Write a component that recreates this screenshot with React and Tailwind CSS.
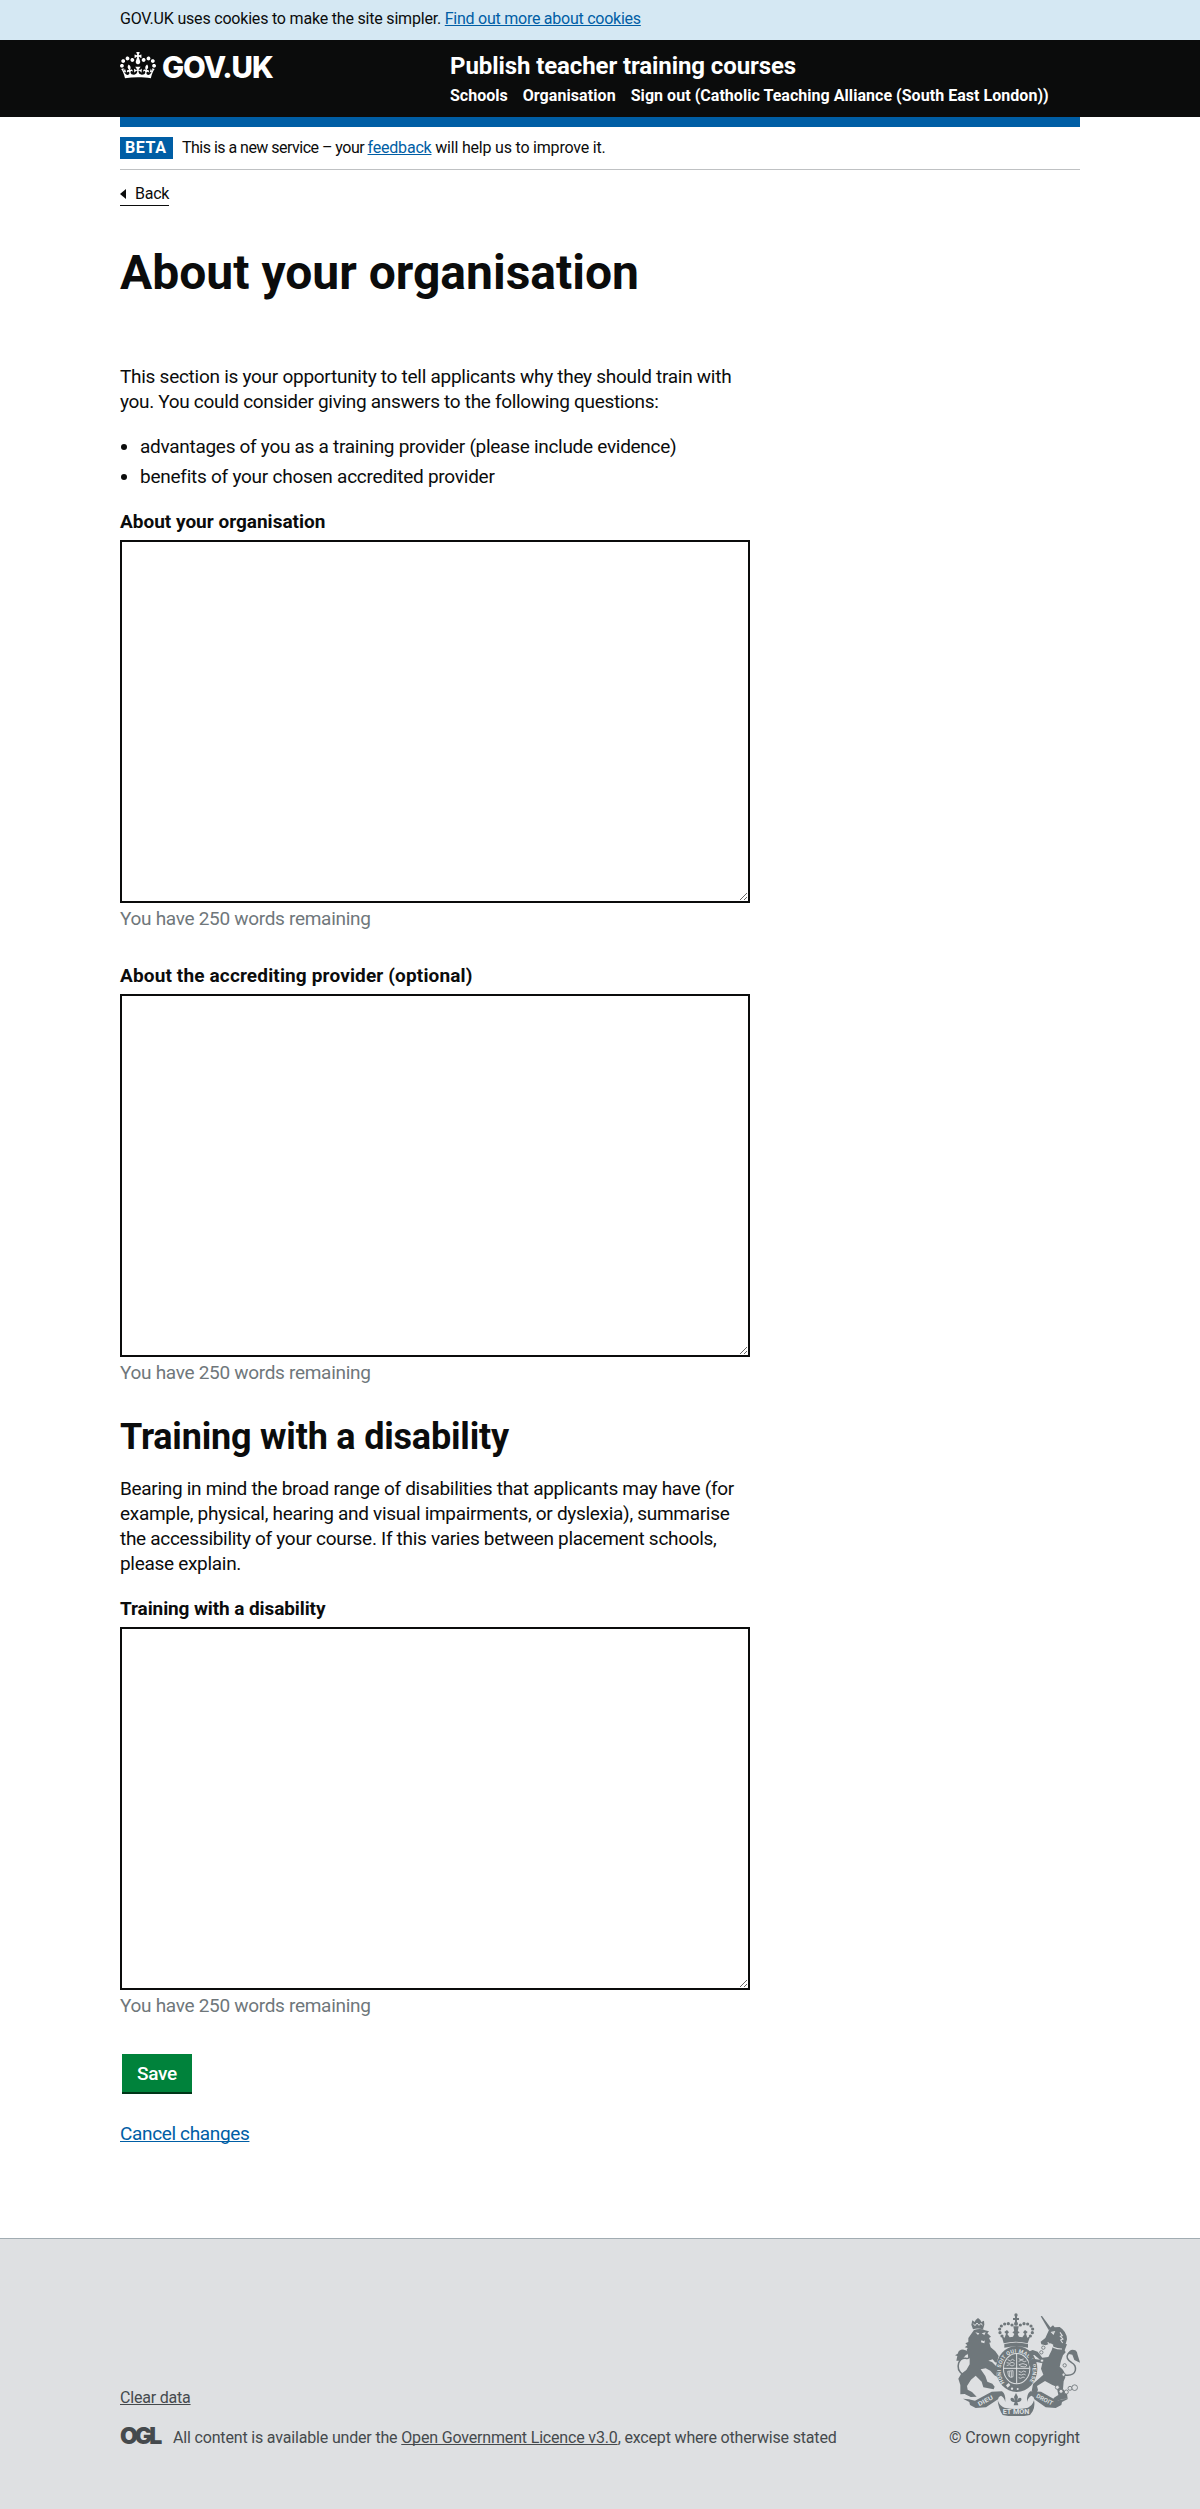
function Crown() {
  return (
    <svg viewBox="0 0 132 97" className="h-[26.5px] w-9 shrink-0 fill-white" aria-hidden="true">
      <path d="M25 30.2c3.5 1.5 7.7-.2 9.1-3.7 1.5-3.6-.2-7.8-3.9-9.2-3.6-1.4-7.6.3-9.1 3.9-1.4 3.5.3 7.5 3.9 9zM9 39.5c3.6 1.5 7.8-.2 9.2-3.7 1.5-3.6-.2-7.8-3.9-9.1-3.6-1.5-7.6.2-9.1 3.8-1.4 3.5.3 7.5 3.8 9zM4.4 57.2c3.5 1.5 7.7-.2 9.1-3.8 1.5-3.6-.2-7.7-3.9-9.1-3.5-1.5-7.6.3-9.1 3.8-1.4 3.5.3 7.6 3.9 9.1zm38.3-21.4c3.5 1.5 7.7-.2 9.1-3.8 1.5-3.6-.2-7.7-3.9-9.1-3.6-1.5-7.6.3-9.1 3.8-1.3 3.6.4 7.7 3.9 9.1zm64.4-5.6c-3.6 1.5-7.8-.2-9.1-3.7-1.5-3.6.2-7.8 3.8-9.2 3.6-1.4 7.7.3 9.2 3.9 1.3 3.5-.4 7.5-3.9 9zm15.9 9.3c-3.6 1.5-7.7-.2-9.1-3.7-1.5-3.6.2-7.8 3.7-9.1 3.6-1.5 7.7.2 9.2 3.8 1.5 3.5-.3 7.5-3.8 9zm4.7 17.7c-3.6 1.5-7.8-.2-9.2-3.8-1.5-3.6.2-7.7 3.9-9.1 3.6-1.5 7.7.3 9.2 3.8 1.3 3.5-.4 7.6-3.9 9.1zM89.3 35.8c-3.6 1.5-7.8-.2-9.2-3.8-1.4-3.6.2-7.7 3.9-9.1 3.6-1.5 7.7.3 9.2 3.8 1.4 3.6-.3 7.7-3.9 9.1zM69.7 17.7l8.9 4.7V9.3l-8.9 2.8c-.2-.3-.5-.6-.9-.9L72.4 0H59.6l3.5 11.2c-.3.3-.6.5-.9.9l-8.8-2.8v13.1l8.8-4.7c.3.3.6.7.9.9l-5 15.4v.1c-.2.8-.4 1.6-.4 2.4 0 4.1 3.1 7.5 7 8.1h.2c.3 0 .7.1 1 .1.4 0 .7 0 1-.1h.2c4-.6 7.1-4.1 7.1-8.1 0-.8-.1-1.7-.4-2.4V34l-5.1-15.4c.4-.2.7-.6 1-.9zM66 92.8c16.9 0 32.8 1.1 47.1 3.2 4-16.9 8.9-26.7 14-33.5l-9.6-3.4c1 4.9 1.1 7.2 0 10.2-1.5-1.4-3-4.3-4.2-8.7L108.6 76c2.8-2 5-3.2 7.5-3.3-4.4 9.4-10 11.9-13.6 11.2-4.3-.8-6.3-4.6-5.6-7.9 1-4.7 5.7-5.9 8-.5 4.3-8.7-3-11.4-7.6-8.8 7.1-7.2 7.9-13.5 2.1-21.1-8 6.1-8.1 12.3-4.5 20.8-4.7-5.4-12.1-2.5-9.5 6.2 3.4-5.2 7.9-2 7.2 3.1-.6 4.3-6.4 7.8-13.5 7.2-10.3-.9-10.9-8-11.2-13.8 2.5-.5 7.1 1.8 11 7.3L80.2 60c-4.1 4.4-8 5.3-12.3 5.4 1.4-4.4 8-11.6 8-11.6H55.5s6.4 7.2 7.9 11.6c-4.2-.1-8-1-12.3-5.4l1.4 16.4c3.9-5.5 8.5-7.7 10.9-7.3-.3 5.8-.9 12.8-11.1 13.8-7.2.6-12.9-2.9-13.5-7.2-.7-5 3.8-8.3 7.1-3.1 2.7-8.7-4.6-11.6-9.4-6.2 3.7-8.5 3.6-14.7-4.6-20.8-5.8 7.6-5 13.9 2.2 21.1-4.7-2.6-11.9.1-7.7 8.8 2.3-5.5 7.1-4.2 8.1.5.7 3.3-1.3 7.1-5.7 7.9-3.5.7-9-1.8-13.5-11.2 2.5.1 4.7 1.3 7.5 3.3l-4.7-15.4c-1.2 4.4-2.7 7.2-4.3 8.7-1.1-3-.9-5.3 0-10.2l-9.5 3.4c5 6.9 9.9 16.7 14 33.5 14.8-2.1 30.8-3.2 47.7-3.2z" />
    </svg>
  );
}

const archBeads = [
  [186, 51], [175, 47], [164, 48], [154, 54], [149, 63], [150, 74], [156, 84],
  [211, 51], [222, 47], [233, 48], [243, 54], [248, 63], [247, 74], [241, 84],
];

function Crest() {
  return (
    <svg viewBox="15 15 375 309" className="h-[103px] w-[125px] fill-[#6f777b]" aria-hidden="true">
      <defs>
        <path id="garter" d="M164 224 A48 54 0 1 1 236 224" />
      </defs>

      {/* central crown */}
      <circle cx="198" cy="21" r="5" />
      <path d="M195 24h6v6h6v6h-6v7h-6v-7h-6v-6h6z" />
      <circle cx="198" cy="47" r="6" />
      {archBeads.map(([x, y]) => (
        <circle key={`${x}-${y}`} cx={x} cy={y} r="4.8" />
      ))}
      <path d="M190 55h16l-3 17h-10z" />
      <path d="M155 84l9 5 4-12-5-5 8-6 6 7-5 5 7 10 10-2 4-8-6-5 11-7 11 7-6 5 4 8 10 2 7-10-5-5 6-7 8 6-5 5 4 12 9-5-8 22q-35-9-72 0z" />
      <path d="M163 108q35-9 71 0v11q-35-9-71 0z" />

      {/* garter and shield */}
      <ellipse cx="200" cy="183" rx="62" ry="69" />
      <ellipse cx="200" cy="182" rx="41" ry="47" fill="#dee0e2" />
      <ellipse cx="200" cy="182" rx="38" ry="44" />
      <path d="M200 138v88M162 181h76" stroke="#dee0e2" strokeWidth="3" />
      <g fill="none" stroke="#dee0e2" strokeWidth="2.4">
        <path d="M173 155l8 4 6-5 7 4M170 164l9 2 7-3 8 3M170 173l8-3 8 4 8-4" />
        <path d="M206 152l7 3 8-2M206 160l8-3 9 4 6-2M207 170q12-7 24 1l-5 6-14-2z" />
        <path d="M173 190l16-2v18q-14 8-16-16zM178 190v17M184 190v18" />
        <path d="M206 190l8 3 7-4 7 3M206 199l8 2 8-3 5 3M206 209l6 2 7-4 5 2" />
      </g>
      <text fill="#dee0e2" fontFamily="Roboto, sans-serif" fontSize="16" fontWeight="700">
        <textPath href="#garter" textLength="232" lengthAdjust="spacing">
          HONI SOIT QUI MAL Y PENSE
        </textPath>
      </text>
      <g fill="#dee0e2">
        <circle cx="186" cy="242" r="3.5" />
        <circle cx="203" cy="243" r="3" />
        <path d="M168 232l8-7 5 6-8 8z" />
      </g>

      {/* lion */}
      <path d="M64 50l3-13 7 5 3-6 7-6 7 6 3 6 8-4 1 12-4 14q-16-5-30 0z" />
      <path d="M70 47l5 6 6-8 6 7 6-6 4 6" fill="none" stroke="#dee0e2" strokeWidth="3" />
      <path d="M72 66q20-6 33 1l12 3-5 6 11 10-6 4 6 13-5 1 4 14 14 12 10 14-4 14 2 6-9-1-7-9-13 4 11 4 12 12 6 7-5 13 2 12-8-4-12-14-14-7-15 3 14 20 6 17 15 6 7 9-3 8-8-2-23-4-5-17-18-18-14 12-12 19 2 11 13 7 14 14-18 1-18-9-13 1 0-28-6-19 8-14 16-12 10-17 0-16-5-12-4-15 3-6-9-2 8-6-6-6 9-4 0-12z" />
      <path d="M76 73l12 3-4 5zM95 76l12-3-4 8zM94 97l8 3 3-4-2 10-10-3z" fill="#dee0e2" />
      <path d="M39 199Q19 187 26 165Q32 149 47 151Q61 155 55 136Q48 125 36 132" fill="none" stroke="#6f777b" strokeWidth="4.5" />
      <path d="M54 137q-8-15-21-12-8 2-10 12l-8 5 7 2-3 14q15 2 22-9 4-8 13-12z" />

      {/* unicorn */}
      <path d="M272 25l4-1 27 37-7 5z" />
      <path d="M300 59l9-7 5 6 15-1q21 13 22 37l-4 14 4 1-7 18 3 6-8 9q-8 20-10 34 17 12 17 32l-5 12-2 23 12 14 2 15-15 1-18 7-19 2 13-14 11-7-5-25-13-5-22-12-24 15 3 12-6 12-13-8 4-22 31-28-7-18 4-16-17-4-12 9 3 10-13-7-2-14 11-8 23 3-17-14-14 2-4-12 13-5 15 5 14 18 18-2 10-20 5-17-8-4-15 6-13-3-2-8 14-11z" />
      <path d="M305 73l8-2-3 7zM293 103q17 21 43 20M330 73l7 10-6 2 8 8-7 3 6 9" fill="none" stroke="#dee0e2" strokeWidth="3.2" />
      <g fill="#dee0e2" stroke="#6f777b" strokeWidth="2.6">
        <circle cx="280" cy="119" r="5" />
        <circle cx="274" cy="133" r="5" />
        <circle cx="276" cy="158" r="5" />
        <circle cx="344" cy="172" r="5" />
        <circle cx="341" cy="200" r="5" />
        <circle cx="322" cy="238" r="6" />
        <circle cx="333" cy="250" r="6" />
        <circle cx="349" cy="252" r="6" />
        <circle cx="360" cy="241" r="6" />
        <circle cx="374" cy="239" r="8.5" />
      </g>
      <path d="M344 201Q371 205 376 187Q379 172 365 164Q345 151 354 138Q362 127 375 139" fill="none" stroke="#6f777b" strokeWidth="4.5" />
      <path d="M353 137q8-17 23-10 6 4 7 14l5 16 2 7-17-8-6-16z" />

      {/* ribbon and motto */}
      <path d="M39 272l18 2 18 4 50-27 31-1q12 9 10 32-4-15-13-19-8 2-9 11l-36 24-31 2-17-9-2-9z" />
      <path d="M355 272l-18 2-16 4-48-27-32-1q-12 9-10 32 4-15 13-19 8 2 9 11l34 24 30 2 17-9 2-9z" />
      <path d="M143 277q6 17 20 22 36 8 71 0 13-6 18-22 4 17-4 33l-8 11q-42 9-82 0-13-20-15-44z" />
      <g fill="#dee0e2" fontFamily="Roboto, sans-serif" fontWeight="700">
        <text x="158" y="318" fontSize="20" textLength="80" lengthAdjust="spacingAndGlyphs">ET MON</text>
        <text x="0" y="0" fontSize="18" transform="translate(88 295) rotate(-28)" textLength="48" lengthAdjust="spacingAndGlyphs">DIEU</text>
        <text x="0" y="0" fontSize="18" transform="translate(257 268) rotate(27)" textLength="54" lengthAdjust="spacingAndGlyphs">DROIT</text>
      </g>

      {/* fleur-de-lis */}
      <path d="M198 255l6 12-3 12q4-13 12-9 5 8-6 12h-5l3 10h-14l3-10h-5q-11-4-6-12 8-4 12 9l-3-12z" />
    </svg>
  );
}

const underline = 'underline decoration-1 underline-offset-[1px] [text-decoration-skip-ink:none]';

function Field({ id, label, labelClass }) {
  return (
    <div className="w-[630px]">
      <label htmlFor={id} className={`block font-bold ${labelClass}`}>{label}</label>
      <textarea id={id} className="mt-1.5 block h-[363px] w-full resize-y border-2 border-[#0b0c0c] bg-white p-[5px]" />
      <p className="mt-[3px] tracking-[-0.3px] text-[#6f777b]">You have 250 words remaining</p>
    </div>
  );
}

export default function App() {
  return (
    <div className="flex min-h-[2509px] flex-col bg-white font-['Roboto',sans-serif] text-[19px] leading-[25px] text-[#0b0c0c]">
      <div className="h-10 bg-[#d5e8f3]">
        <p className="mx-auto w-[960px] pt-[9px] text-base leading-5 tracking-[-0.195px]">
          GOV.UK uses cookies to make the site simpler.{' '}
          <a href="#cookies" className={`tracking-[-0.25px] text-[#005ea5] ${underline}`}>Find out more about cookies</a>
        </p>
      </div>

      <header className="h-[77px] bg-[#0b0c0c] text-white">
        <div className="mx-auto flex w-[960px]">
          <a href="#home" className="flex w-[330px] pt-3">
            <Crown />
            <span className="ml-1.5 font-['Inter',sans-serif] text-[29.5px] leading-[30px] font-extrabold tracking-[-1.1px]">GOV.UK</span>
          </a>
          <div className="pt-[11px] font-bold">
            <a href="#service" className="block text-2xl leading-[30px] tracking-[-0.09px]">Publish teacher training courses</a>
            <nav className="mt-[5px] flex gap-[15px] text-base leading-5 whitespace-nowrap">
              <a href="#schools">Schools</a>
              <a href="#organisation" className="tracking-[0.08px]">Organisation</a>
              <a href="#sign-out" className="tracking-[0.04px]">Sign out (Catholic Teaching Alliance (South East London))</a>
            </nav>
          </div>
        </div>
      </header>

      <div className="mx-auto w-[960px]">
        <div className="h-2.5 bg-[#005ea5]" />
        <div className="flex h-[43px] border-b border-[#bfc1c3] pt-2.5 text-base leading-5">
          <strong className="h-[22px] w-[53px] bg-[#005ea5] pl-[5px] leading-[22px] tracking-[0.6px] text-white">BETA</strong>
          <p className="ml-[9px] pt-px tracking-[-0.2px]">
            <span className="tracking-[-0.52px]">This is a new service – your </span>
            <a href="#feedback" className={`text-[#005ea5] ${underline}`}>feedback</a> will help us to improve it.
          </p>
        </div>

        <a href="#back" className="mt-[13px] flex h-[23px] w-[49px] items-start border-b border-[#0b0c0c] text-base leading-5 tracking-[-0.25px]">
          <svg viewBox="0 0 6 10" className="mt-1.5 mr-[9px] h-2.5 w-1.5 shrink-0 fill-current" aria-hidden="true">
            <path d="M6 0v10L0 5z" />
          </svg>
          <span className="pt-px">Back</span>
        </a>

        <main>
          <h1 className="mt-[42px] text-5xl leading-[50px] font-bold">About your organisation</h1>

          <p className="mt-[66px] tracking-[-0.27px]">
            This section is your opportunity to tell applicants why they should train with
            <br />
            <span className="tracking-[-0.32px]">you. You could consider giving answers to the following questions:</span>
          </p>
          <ul className="mt-5 mb-5 list-disc space-y-[5px] pl-5">
            <li className="tracking-[-0.29px]">advantages of you as a training provider (please include evidence)</li>
            <li className="tracking-[-0.25px]">benefits of your chosen accredited provider</li>
          </ul>

          <Field id="about" label="About your organisation" labelClass="" />
          <div className="h-8" />
          <Field id="accrediting" label="About the accrediting provider (optional)" labelClass="tracking-[0.15px]" />

          <h2 className="mt-8 text-4xl leading-10 font-bold tracking-[-0.2px]">Training with a disability</h2>
          <p className="mt-[19px] mb-5 tracking-[-0.3px]">
            Bearing in mind the broad range of disabilities that applicants may have (for
            <br />
            example, physical, hearing and visual impairments, or dyslexia), summarise
            <br />
            the accessibility of your course. If this varies between placement schools,
            <br />
            please explain.
          </p>
          <Field id="disability" label="Training with a disability" labelClass="tracking-[-0.1px]" />

          <button type="button" className="mt-9 ml-0.5 flex h-10 w-[70px] items-center justify-center border-b-2 border-[#003618] bg-[#00823b] pt-px font-medium tracking-[-0.3px] text-white">
            Save
          </button>
          <p className="mt-[27px]">
            <a href="#cancel" className={`tracking-[-0.35px] text-[#005ea5] ${underline}`}>Cancel changes</a>
          </p>
        </main>
      </div>

      <footer className="mt-[92px] flex-1 border-t border-[#a1acb2] bg-[#dee0e2] text-base leading-5 text-[#454a4d]">
        <div className="mx-auto flex w-[960px] justify-between pt-[74px]">
          <div className="flex flex-col justify-end">
            <a href="#clear" className={`self-start tracking-[-0.2px] ${underline}`}>Clear data</a>
            <div className="mt-5 flex">
              <span className="mt-[-2px] w-[53px] font-['Inter',sans-serif] text-[23px] leading-5 font-black tracking-[-3px]">OGL</span>
              <p className="tracking-[-0.17px]">
                All content is available under the{' '}
                <a href="#licence" className={underline}>Open Government Licence v3.0</a>, except where otherwise stated
              </p>
            </div>
          </div>
          <div className="flex flex-col items-end">
            <Crest />
            <p className="mt-3 tracking-[-0.08px]">© Crown copyright</p>
          </div>
        </div>
      </footer>
    </div>
  );
}
